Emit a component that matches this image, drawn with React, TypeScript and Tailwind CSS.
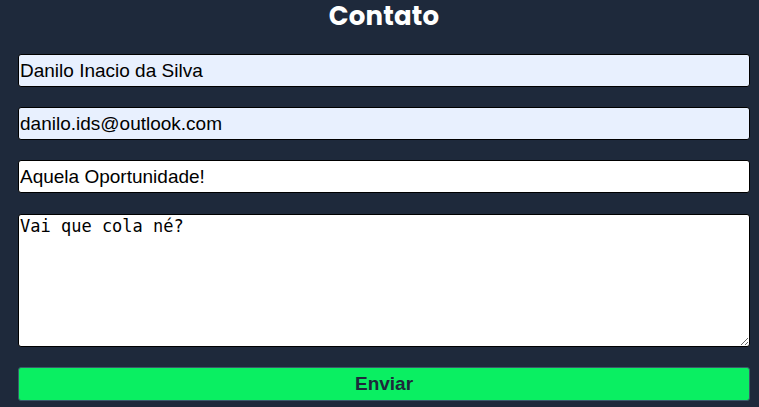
export default function App() {
  return (
    <div className="w-[759px] h-[407px] bg-[#1e293b] overflow-hidden">
      <h1 className="pl-[9px] pt-[1px] text-center text-white font-bold text-[26px] leading-[30px] font-['Poppins','Inter',sans-serif] tracking-[0.2px]">
        Contato
      </h1>
      <form className="flex flex-col gap-[20px] pl-[18px] pr-[9px] mt-[23px]">
        <input
          defaultValue="Danilo Inacio da Silva"
          className="h-[33px] w-full bg-[#e8f0fe] border border-black rounded-[3px] px-[1px] text-[19px] text-black font-['Liberation_Sans',Arial,sans-serif] outline-none"
        />
        <input
          defaultValue="danilo.ids@outlook.com"
          className="h-[33px] w-full bg-[#e8f0fe] border border-black rounded-[3px] px-[1px] text-[19px] text-black font-['Liberation_Sans',Arial,sans-serif] outline-none"
        />
        <input
          defaultValue="Aquela Oportunidade!"
          className="h-[33px] w-full bg-white border border-black rounded-[3px] px-[1px] text-[19px] text-black font-['Liberation_Sans',Arial,sans-serif] outline-none"
        />
        <textarea
          defaultValue="Vai que cola né?"
          className="h-[133px] mt-[1px] w-full bg-white border border-black rounded-[3px] px-[1px] pt-[1px] text-[17px] leading-[20px] text-black font-['DejaVu_Sans_Mono',monospace] outline-none resize-y"
        />
        <button
          type="button"
          className="h-[34px] w-full bg-[#0aef62] border border-[#3b5a6b] rounded-[3px] text-[19px] font-bold text-[#1e293b] font-['Liberation_Sans',Arial,sans-serif]"
        >
          Enviar
        </button>
      </form>
    </div>
  );
}
